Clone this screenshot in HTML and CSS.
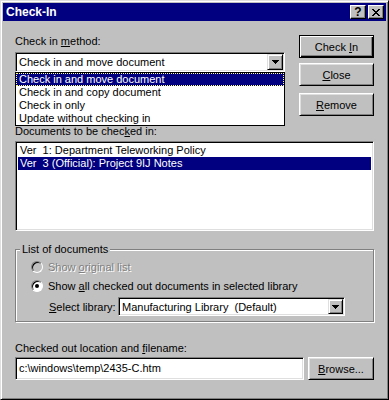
FILE: index.html
```html
<!doctype html>
<html lang='en-US'>
  <head>
    <title>Check-In</title>
    <meta charset='UTF-8'>
    <meta name='viewport' content='width=device-width, initial-scale=1'>
    <link rel="stylesheet" href="styles.css">
  </head>
  <body>
<div class=window>
  <div class=titlebar>
    <span class=title>Check-In</span>
    <span class=tbtn>?</span>
    <span class="tbtn close"><svg width=8 height=7 viewBox="0 0 8 7"><path d="M0 0h2v1h-2zM6 0h2v1h-2zM1 1h2v1h-2zM5 1h2v1h-2zM2 2h4v1h-4zM3 3h2v1h-2zM2 4h4v1h-4zM1 5h2v1h-2zM5 5h2v1h-2zM0 6h2v1h-2zM6 6h2v1h-2z"/></svg></span>
  </div>
  <div class=content>
    <div class=top>
      <div class=method>
        <div class=label>Check in <u>m</u>ethod:</div>
        <div class="combo wide">
          <span class=value>Check in and move document</span>
          <span class=drop><svg width=7 height=4 viewBox="0 0 7 4"><path d="M0 0h7v1h-1v1h-1v1h-1v1h-1v-1h-1v-1h-1v-1h-1z"/></svg></span>
        </div>
        <ul class=popup>
          <li class="selected focus">Check in and move document</li>
          <li>Check in and copy document</li>
          <li>Check in only</li>
          <li>Update without checking in</li>
        </ul>
      </div>
      <div class=buttons>
        <button class="btn default">Check <u>I</u>n</button>
        <button class="btn close-btn"><u>C</u>lose</button>
        <button class="btn remove-btn"><u>R</u>emove</button>
      </div>
    </div>

    <div class="label docs-label">Documents to be chec<u>k</u>ed in:</div>
    <ul class=list>
      <li>Ver  1: Department Teleworking Policy</li>
      <li class=selected>Ver  3 (Official): Project 9IJ Notes</li>
    </ul>

    <fieldset class=group>
      <legend>List of documents</legend>
      <div class="row disabled"><span class=radio></span><span>Show <u>o</u>riginal list</span></div>
      <div class=row><span class="radio on"></span><span>Show <u>a</u>ll checked out documents in selected library</span></div>
      <div class="row library">
        <span class=lib-label><u>S</u>elect library:</span>
        <div class="combo small">
          <span class=value>Manufacturing Library  (Default)</span>
          <span class=drop><svg width=7 height=4 viewBox="0 0 7 4"><path d="M0 0h7v1h-1v1h-1v1h-1v1h-1v-1h-1v-1h-1v-1h-1z"/></svg></span>
        </div>
      </div>
    </fieldset>

    <div class="label path-label">Checked out location and <u>f</u>ilename:</div>
    <div class=path-row>
      <div class=field>c:\windows\temp\2435-C.htm</div>
      <button class="btn browse"><u>B</u>rowse...</button>
    </div>
  </div>
</div>
  </body>
</html>
```

FILE: styles.css
```css
html, body {
  margin: 0;
  background: #c0c0c0;
  font-size: 11px;
  font-family: "Liberation Sans", Arial, sans-serif;
  color: #000;
}
u {
  text-decoration-thickness: 1px;
  text-underline-offset: 1px;
}
.window {
  width: 389px;
  height: 400px;
  box-sizing: border-box;
  padding: 2px;
  border: 1px solid;
  border-color: #dfdfdf #000 #000 #dfdfdf;
  box-shadow: inset 1px 1px #fff, inset -1px -1px #808080;
  background: #c0c0c0;
}
.titlebar {
  height: 18px;
  background: #000080;
  display: flex;
  align-items: center;
  gap: 2px;
  padding: 0 2px 0 3px;
}
.title {
  flex: 1;
  color: #fff;
  font-weight: bold;
  font-size: 12px;
}
.tbtn {
  width: 16px;
  height: 14px;
  box-sizing: border-box;
  background: #c0c0c0;
  border: 1px solid;
  border-color: #fff #000 #000 #fff;
  box-shadow: inset -1px -1px #808080;
  display: flex;
  align-items: center;
  justify-content: center;
  font-weight: bold;
  font-size: 12px;
  line-height: 1;
}
.content {
  padding: 14px 12px 0;
}
.label {
  line-height: 13px;
  height: 13px;
}
.top {
  display: flex;
  justify-content: space-between;
}
.method {
  position: relative;
  width: 270px;
}
.combo {
  margin-top: 4px;
  height: 20px;
  box-sizing: border-box;
  background: #fff;
  border: 1px solid;
  border-color: #808080 #fff #fff #808080;
  box-shadow: inset 1px 1px #000, inset -1px -1px #dfdfdf;
  display: flex;
  align-items: center;
  padding: 1px 1px 1px 3px;
}
.combo .value {
  flex: 1;
  white-space: pre;
}
.drop {
  width: 16px;
  height: 16px;
  box-sizing: border-box;
  background: #c0c0c0;
  border: 1px solid;
  border-color: #dfdfdf #000 #000 #dfdfdf;
  box-shadow: inset 1px 1px #fff, inset -1px -1px #808080;
  display: flex;
  align-items: center;
  justify-content: center;
}
.popup {
  position: absolute;
  top: 37px;
  left: 0;
  right: 0;
  margin: 0;
  padding: 0;
  list-style: none;
  background: #fff;
  border: 1px solid #000;
}
.popup li {
  height: 13px;
  line-height: 13px;
  padding-left: 3px;
}
.selected {
  background: #000080;
  color: #fff;
}
.focus {
  outline: 1px dotted #ffff80;
  outline-offset: -1px;
}
.buttons {
  width: 75px;
  display: flex;
  flex-direction: column;
}
.btn {
  font: inherit;
  color: #000;
  height: 23px;
  padding: 0;
  background: #c0c0c0;
  border: 1px solid;
  border-color: #fff #000 #000 #fff;
  box-shadow: inset 1px 1px #dfdfdf, inset -1px -1px #808080;
}
.btn.default {
  border-color: #000;
  box-shadow: inset 1px 1px #fff, inset -1px -1px #000, inset -2px -2px #808080;
}
.close-btn {
  margin-top: 5px;
}
.remove-btn {
  margin-top: 7px;
}
.docs-label {
  margin-top: 9px;
}
.list {
  margin: 3px 0 0;
  padding: 2px;
  list-style: none;
  height: 90px;
  box-sizing: border-box;
  background: #fff;
  border: 1px solid;
  border-color: #808080 #fff #fff #808080;
  box-shadow: inset 1px 1px #000, inset -1px -1px #dfdfdf;
}
.list li {
  height: 13px;
  line-height: 13px;
  padding-left: 2px;
  white-space: pre;
}
.group {
  margin: 12px 0 0;
  padding: 1px 0 0;
  height: 79px;
  box-sizing: border-box;
  border: 1px solid #808080;
  box-shadow: inset 1px 1px #fff, 1px 1px #fff;
}
.group legend {
  margin-left: 4px;
  padding: 0 2px;
  line-height: 13px;
  background: #c0c0c0;
}
.row {
  height: 19px;
  padding-left: 15px;
  display: flex;
  align-items: center;
  gap: 5px;
  white-space: nowrap;
}
.disabled {
  color: #808080;
  text-shadow: 1px 1px #fff;
}
.radio {
  flex: none;
  width: 12px;
  height: 12px;
  box-sizing: border-box;
  border-radius: 50%;
  background: #fff;
  border: 1px solid;
  border-color: #808080 #fff #fff #808080;
  box-shadow: inset 1px 1px #000;
  display: flex;
  align-items: center;
  justify-content: center;
}
.disabled .radio {
  background: #c0c0c0;
}
.radio.on::after {
  content: '';
  width: 4px;
  height: 4px;
  border-radius: 50%;
  background: #000;
}
.library {
  height: 21px;
  margin-top: 1px;
  padding-left: 33px;
  gap: 0;
}
.lib-label {
  width: 69px;
}
.combo.small {
  margin-top: 0;
  width: 227px;
  height: 19px;
}
.combo.small .drop {
  height: 15px;
  width: 15px;
}
.path-label {
  margin-top: 20px;
}
.path-row {
  margin-top: 2px;
  display: flex;
  gap: 4px;
}
.field {
  width: 289px;
  height: 23px;
  box-sizing: border-box;
  background: #fff;
  border: 1px solid;
  border-color: #808080 #fff #fff #808080;
  box-shadow: inset 1px 1px #000, inset -1px -1px #dfdfdf;
  padding: 0 3px;
  line-height: 21px;
}
.browse {
  flex: 1;
}
```
